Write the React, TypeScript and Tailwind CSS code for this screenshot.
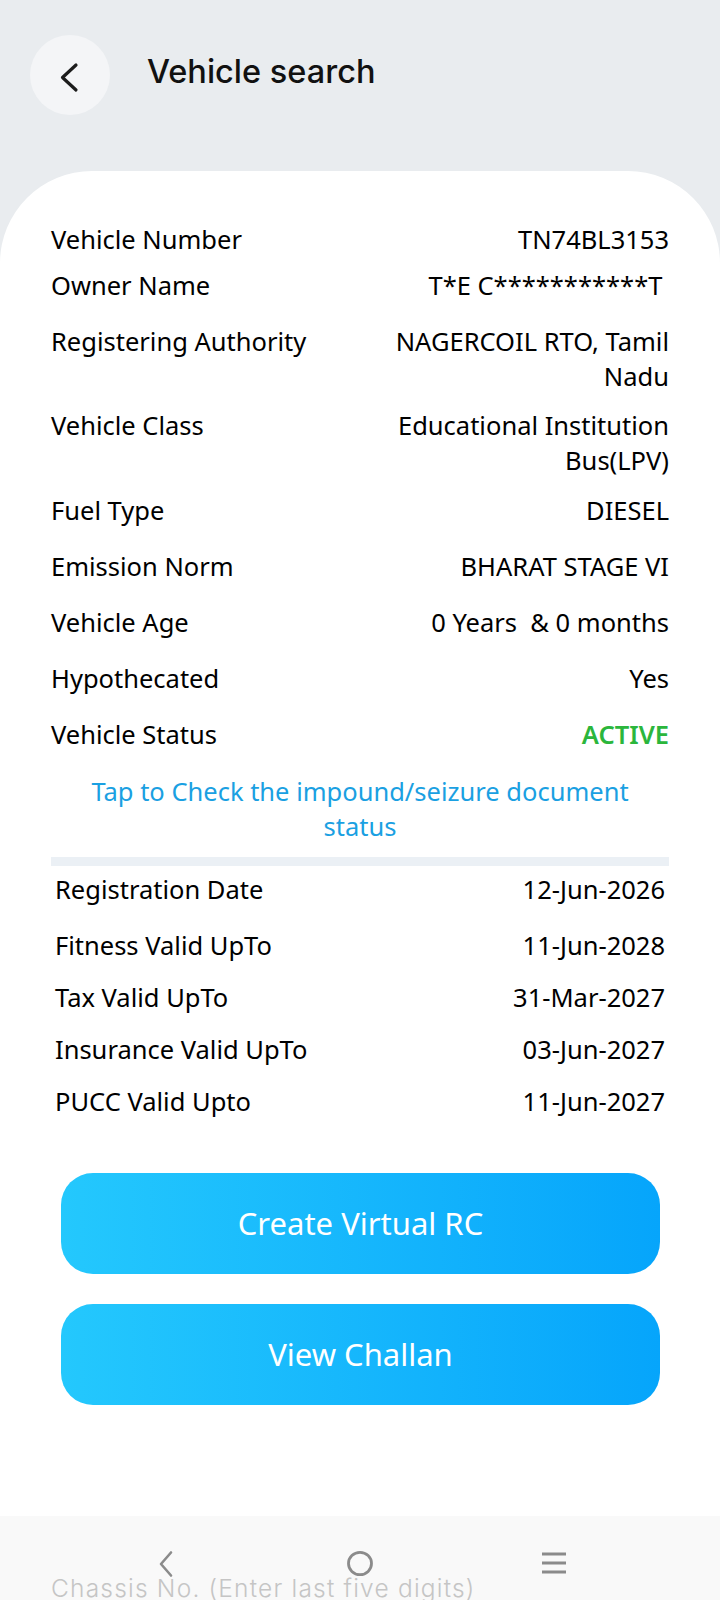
type InfoRow = {
  label: string;
  value: string;
  spacing: string;
  active?: boolean;
};

// Registration details; spacing mirrors the app's uneven row rhythm
const vehicleRows: InfoRow[] = [
  { label: "Vehicle Number", value: "TN74BL3153", spacing: "mt-0" },
  { label: "Owner Name", value: "T*E C***********T\u00a0", spacing: "mt-[11px]" },
  { label: "Registering Authority", value: "NAGERCOIL RTO, Tamil Nadu", spacing: "mt-[21px]" },
  { label: "Vehicle Class", value: "Educational Institution Bus(LPV)", spacing: "mt-[14px]" },
  { label: "Fuel Type", value: "DIESEL", spacing: "mt-[15px]" },
  { label: "Emission Norm", value: "BHARAT STAGE VI", spacing: "mt-[21px]" },
  { label: "Vehicle Age", value: "0 Years\u00a0 & 0 months", spacing: "mt-[21px]" },
  { label: "Hypothecated", value: "Yes", spacing: "mt-[21px]" },
  { label: "Vehicle Status", value: "ACTIVE", spacing: "mt-[21px]", active: true },
];

const validityRows: InfoRow[] = [
  { label: "Registration Date", value: "12-Jun-2026", spacing: "mt-0" },
  { label: "Fitness Valid UpTo", value: "11-Jun-2028", spacing: "mt-[21px]" },
  { label: "Tax Valid UpTo", value: "31-Mar-2027", spacing: "mt-[17px]" },
  { label: "Insurance Valid UpTo", value: "03-Jun-2027", spacing: "mt-[17px]" },
  { label: "PUCC Valid Upto", value: "11-Jun-2027", spacing: "mt-[17px]" },
];

const BackButton = () => (
  <button
    type="button"
    className="flex h-[80px] w-[80px] shrink-0 items-center justify-center rounded-full bg-[#f4f5f7]"
    aria-label="Back"
  >
    <svg width="80" height="80" viewBox="0 0 80 80" fill="none">
      <path
        d="M46 30 L32.5 42.5 L46 55"
        stroke="#1c1c1c"
        strokeWidth="3.2"
        strokeLinecap="round"
        strokeLinejoin="round"
      />
    </svg>
  </button>
);

const DetailRow = ({ row }: { row: InfoRow }) => (
  <div className={`flex items-start justify-between ${row.spacing}`}>
    <span className="shrink-0">{row.label}</span>
    <span
      className={`w-[290px] text-right ${
        row.active ? "font-semibold text-[#2bb63c]" : ""
      }`}
    >
      {row.value}
    </span>
  </div>
);

const ActionButton = ({ label }: { label: string }) => (
  <button
    type="button"
    className="flex h-[101px] w-full items-center justify-center rounded-[32px] bg-linear-to-r from-[#24c8fd] to-[#06a5fb] text-[31px] text-white"
  >
    {label}
  </button>
);

const SystemNav = () => (
  <div className="relative h-[84px] overflow-hidden bg-[#f9f9f9]">
    <div className="flex justify-center gap-[166px] pt-[34px] text-[#8b8b8b]">
      <svg width="28" height="28" viewBox="0 0 28 28" fill="none">
        <path
          d="M19 2.5 L9 14 L19 25.5"
          stroke="currentColor"
          strokeWidth="2.6"
          strokeLinecap="round"
          strokeLinejoin="round"
        />
      </svg>
      <svg width="28" height="28" viewBox="0 0 28 28" fill="none">
        <ellipse cx="14" cy="13.5" rx="11.5" ry="11.2" stroke="currentColor" strokeWidth="2.8" />
      </svg>
      <svg width="28" height="28" viewBox="0 0 28 28" fill="none">
        <path
          d="M2 4 H26 M2 13 H26 M2 22 H26"
          stroke="currentColor"
          strokeWidth="3"
        />
      </svg>
    </div>
    <p className="absolute left-[51px] top-[55px] whitespace-nowrap font-['Inter',sans-serif] text-[24.5px] font-light tracking-[1.2px] text-[#c5c5c5]">
      Chassis No. (Enter last five digits)
    </p>
  </div>
);

export default function App() {
  return (
    <div className="flex min-h-[1600px] w-[720px] flex-col bg-[#e9ecef] font-['Noto_Sans',sans-serif] text-[25.5px] leading-[35px] text-black">
      <header className="flex items-center pl-[30px] pt-[35px]">
        <BackButton />
        <h1 className="mb-[6px] ml-[37px] font-['Inter',sans-serif] text-[32.5px] font-medium leading-[40px] text-[#111]">
          Vehicle search
        </h1>
      </header>

      <main className="mt-[56px] flex flex-1 flex-col rounded-t-[92px] bg-white">
        <div className="px-[51px] pt-[51px]">
          {vehicleRows.map((row) => (
            <DetailRow key={row.label} row={row} />
          ))}

          <p className="mt-[22px] px-[18px] text-center text-[#1aa0e2]">
            Tap to Check the impound/seizure document status
          </p>

          <div className="mt-[13px] h-[9px] bg-[#ebf0f5]" />

          <div className="mt-[6px] px-[4px]">
            {validityRows.map((row) => (
              <DetailRow key={row.label} row={row} />
            ))}
          </div>
        </div>

        <div className="mt-[54px] flex flex-col gap-[30px] pl-[61px] pr-[60px]">
          <ActionButton label="Create Virtual RC" />
          <ActionButton label="View Challan" />
        </div>

        <div className="flex-1" />
        <SystemNav />
      </main>
    </div>
  );
}
